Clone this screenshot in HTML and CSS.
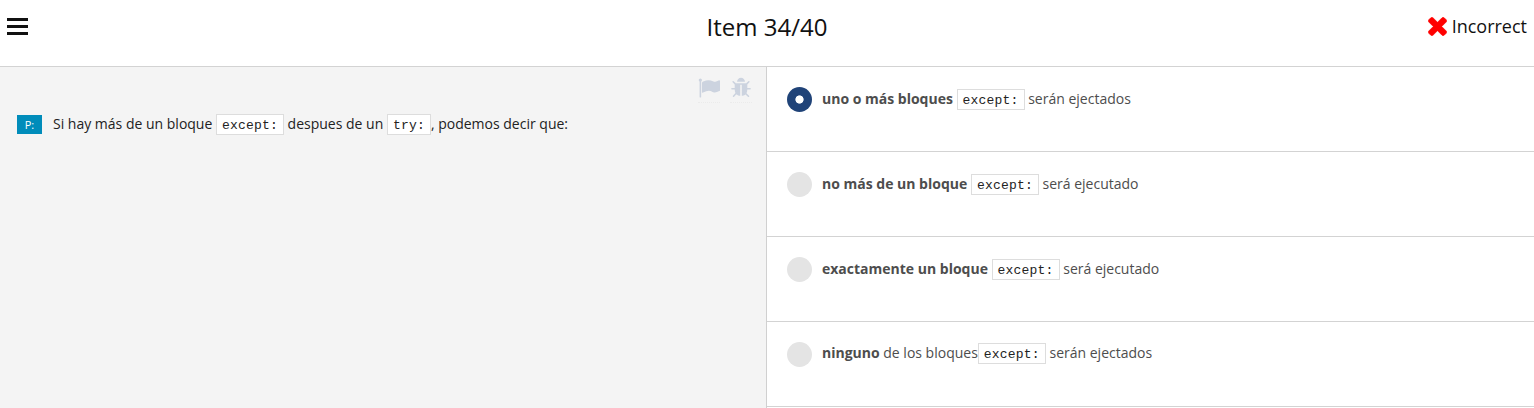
FILE: index.html
```html
<!DOCTYPE html>
<html lang="es">
<head>
<meta charset="utf-8">
<title>Item 34/40</title>
<link rel="stylesheet" href="styles.css">
</head>
<body>
<header class="top">
  <div class="menu"><span></span><span></span><span></span></div>
  <h1 class="title">Item 34/40</h1>
  <div class="result">
    <svg class="cross" viewBox="282 346 1228 1228"><path d="M1490 1322q0 40-28 68l-136 136q-28 28-68 28t-68-28l-294-294-294 294q-28 28-68 28t-68-28l-136-136q-28-28-28-68t28-68l294-294-294-294q-28-28-28-68t28-68l136-136q28-28 68-28t68 28l294 294 294-294q28-28 68-28t68 28l136 136q28 28 28 68t-28 68l-294 294 294 294q28 28 28 68z"/></svg>
    <span>Incorrect</span>
  </div>
</header>
<main class="panes">
  <section class="question">
    <div class="tools">
      <a class="tool"><svg viewBox="0 0 1792 1792"><path d="M320 256q0 72-64 110v1266q0 13-9.5 22.5t-22.5 9.5h-64q-13 0-22.5-9.5t-9.5-22.5v-1266q-64-38-64-110 0-53 37.5-90.5t90.5-37.5 90.5 37.5 37.5 90.5zm1472 64v763q0 25-12.5 38.5t-39.5 27.5q-215 116-369 116-61 0-123.5-22t-108.5-48-115.5-48-142.5-22q-192 0-464 146-17 9-33 9-26 0-45-19t-19-45v-742q0-32 31-55 21-14 79-43 236-120 421-120 107 0 200 29t219 88q38 19 88 19 54 0 117.5-21t110-47 88-47 54.5-21q26 0 45 19t19 45z"/></svg></a>
      <a class="tool"><svg viewBox="0 0 1792 1792"><path d="M1696 960q0 26-19 45t-45 19h-224q0 171-67 290l208 209q19 19 19 45t-19 45q-18 19-45 19t-45-19l-198-197q-5 5-15 13t-42 28.5-65 36.5-82 29-97 13v-896h-128v896q-51 0-101.5-13.5t-87-33-66-39-43.5-32.5l-15-14-183 207q-20 21-48 21-24 0-43-16-19-18-20.5-44.5t15.5-46.5l202-227q-58-114-58-274h-224q-26 0-45-19t-19-45 19-45 45-19h224v-294l-173-173q-19-19-19-45t19-45 45-19 45 19l173 173h844l173-173q19-19 45-19t45 19 19 45-19 45l-173 173v294h224q26 0 45 19t19 45zm-480-576h-640q0-133 93.5-226.5t226.5-93.5 226.5 93.5 93.5 226.5z"/></svg></a>
    </div>
    <div class="prompt">
      <span class="badge">P:</span>
      <p>Si hay más de un bloque <code>except:</code> despues de un <code>try:</code>, podemos decir que:</p>
    </div>
  </section>
  <section class="answers">
    <div class="answer"><span class="radio checked"></span><p><b>uno o más bloques</b> <code>except:</code> serán ejectados</p></div>
    <div class="answer"><span class="radio"></span><p><b>no más de un bloque</b> <code>except:</code> será ejecutado</p></div>
    <div class="answer"><span class="radio"></span><p><b>exactamente un bloque</b> <code>except:</code> será ejecutado</p></div>
    <div class="answer raised"><span class="radio"></span><p><b>ninguno</b> de los bloques<code>except:</code> serán ejectados</p></div>
  </section>
</main>
</body>
</html>
```
FILE: styles.css
```css
* { box-sizing: border-box; }
body {
  margin: 0;
  height: 408px;
  overflow: hidden;
  background: #fff;
  color: #222;
  font: 14px/21px "Open Sans", "Noto Sans", sans-serif;
}
p { margin: 0; white-space: nowrap; }
.top {
  display: grid;
  grid-template-columns: 1fr auto 1fr;
  height: 67px;
  padding: 0 7px;
  border-bottom: 1px solid #d3d3d3;
  color: #111;
}
.menu { display: flex; flex-direction: column; gap: 4px; padding-top: 18px; }
.menu span { width: 21px; height: 3px; background: #111; }
.title { margin: 0; padding-top: 10px; font-size: 24px; line-height: 33px; font-weight: 400; }
.result {
  display: flex;
  justify-content: flex-end;
  gap: 5px;
  padding-top: 14px;
  font-size: 18px;
  line-height: 25px;
}
.cross {
  width: 19px;
  height: 19px;
  margin-top: 3px;
  fill: #f00;
  stroke: #f00;
  stroke-width: 40;
}
.panes { display: grid; grid-template-columns: 767px 1fr; height: 341px; }
.question { background: #f4f4f4; border-right: 1px solid #d0d0d0; }
.tools { display: flex; justify-content: flex-end; gap: 10px; padding: 10px 14px 0 0; height: 46px; }
.tool { width: 22px; height: 26px; border-bottom: 1px dotted #ebebeb; }
.tool svg { display: block; width: 22px; height: 22px; fill: #ccd3df; }
.prompt { display: flex; gap: 11px; padding-left: 17px; }
.badge {
  width: 25px;
  height: 19px;
  margin-top: 2px;
  background: #008cba;
  color: #fff;
  font-size: 11px;
  line-height: 20px;
  text-align: center;
}
code {
  padding: 3px 5px 1px;
  border: 1px solid #ddd;
  background: #fff;
  color: #222;
  font: 13px "Liberation Mono", monospace;
  letter-spacing: 0.2px;
}
.answer {
  display: flex;
  gap: 10px;
  height: 85px;
  padding: 20px;
  border-bottom: 1px solid #d3d3d3;
  color: #4d4d4d;
}
.answer p { padding-top: 1px; }
.raised p { padding-top: 0; }
.radio { width: 25px; height: 25px; border-radius: 50%; background: #e4e4e4; }
.checked { background: radial-gradient(circle, #fff 3.7px, #204378 4.5px); }
```
